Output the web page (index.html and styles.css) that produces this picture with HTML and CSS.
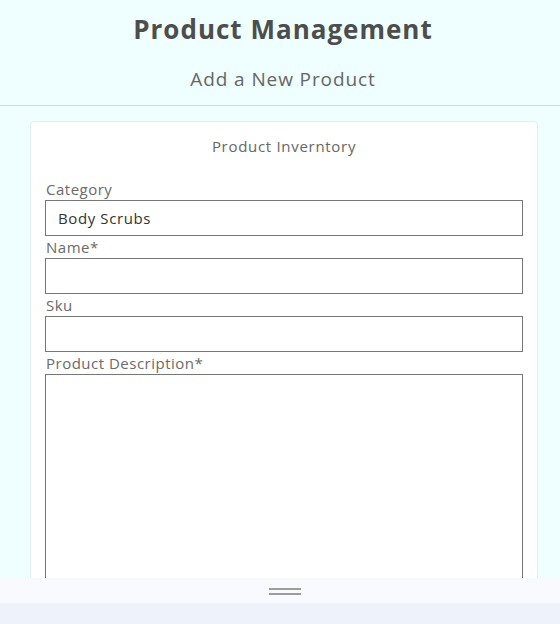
FILE: index.html
```html
<!DOCTYPE html>
<html lang="en">
<head>
<meta charset="utf-8">
<title>Product Management</title>
<link rel="stylesheet" href="styles.css">
</head>
<body>
<header class="page-header">
  <h1 class="page-title">Product Management</h1>
  <p class="page-subtitle">Add a New Product</p>
</header>
<main class="page-main">
  <section class="card">
    <h2 class="card-title">Product Inverntory</h2>
    <form class="form">
      <label class="field-label" for="category">Category</label>
      <input class="field-input" id="category" type="text" value="Body Scrubs">
      <label class="field-label" for="name">Name*</label>
      <input class="field-input" id="name" type="text">
      <label class="field-label" for="sku">Sku</label>
      <input class="field-input" id="sku" type="text">
      <label class="field-label" for="desc">Product Description*</label>
      <textarea class="field-textarea" id="desc"></textarea>
    </form>
  </section>
</main>
<div class="sheet-bar">
  <div class="sheet-handle"><span class="handle-line"></span><span class="handle-line"></span></div>
  <div class="sheet-base"></div>
</div>
</body>
</html>
```

FILE: styles.css
```css
* { box-sizing: border-box; }
html, body { margin: 0; padding: 0; }
body {
  background: #effefe;
  font-family: "Open Sans", "Noto Sans", sans-serif;
  color: #555;
  height: 624px;
  overflow: hidden;
}
.page-header {
  text-align: center;
  border-bottom: 1px solid #c6dcdc;
  padding: 11px 0 13px 6px;
}
.page-title {
  margin: 0;
  font-size: 26px;
  line-height: 36px;
  font-weight: 700;
  color: #4d4d4d;
  letter-spacing: 1px;
}
.page-subtitle {
  margin: 19px 0 0;
  font-size: 19px;
  line-height: 26px;
  color: #666;
  letter-spacing: 0.9px;
}
.page-main {
  padding: 15px 22px 0 30px;
}
.card {
  background: #fff;
  border: 1px solid #e3eeee;
  border-radius: 4px;
  padding: 14px 14px 0;
}
.card-title {
  margin: 0 0 22px;
  text-align: center;
  font-size: 15px;
  line-height: 20px;
  font-weight: 400;
  color: #666;
  letter-spacing: 0.7px;
}
.form {
  display: flex;
  flex-direction: column;
}
.field-label {
  font-size: 15px;
  line-height: 22px;
  color: #6a6a6a;
  padding-left: 1px;
  letter-spacing: 0.5px;
}
.field-input, .field-textarea {
  width: 478px;
  border: 1px solid #777;
  background: #fff;
  font-family: inherit;
  font-size: 15px;
  color: #333;
  margin: 0;
  outline: none;
}
.field-input {
  height: 36px;
  padding: 0 12px;
  letter-spacing: 0.6px;
}
.field-textarea {
  height: 260px;
  resize: none;
}
.sheet-bar {
  position: fixed;
  left: 0;
  right: 0;
  bottom: 0;
  height: 46px;
  display: flex;
  flex-direction: column;
}
.sheet-handle {
  height: 25px;
  background: #f8fafd;
  display: flex;
  flex-direction: column;
  align-items: center;
  justify-content: center;
  gap: 3px;
  padding: 2px 0 0 10px;
}
.handle-line {
  display: block;
  width: 32px;
  height: 2px;
  background: #9c9c9c;
}
.sheet-base {
  flex: 1;
  background: #eef2fa;
}
```
